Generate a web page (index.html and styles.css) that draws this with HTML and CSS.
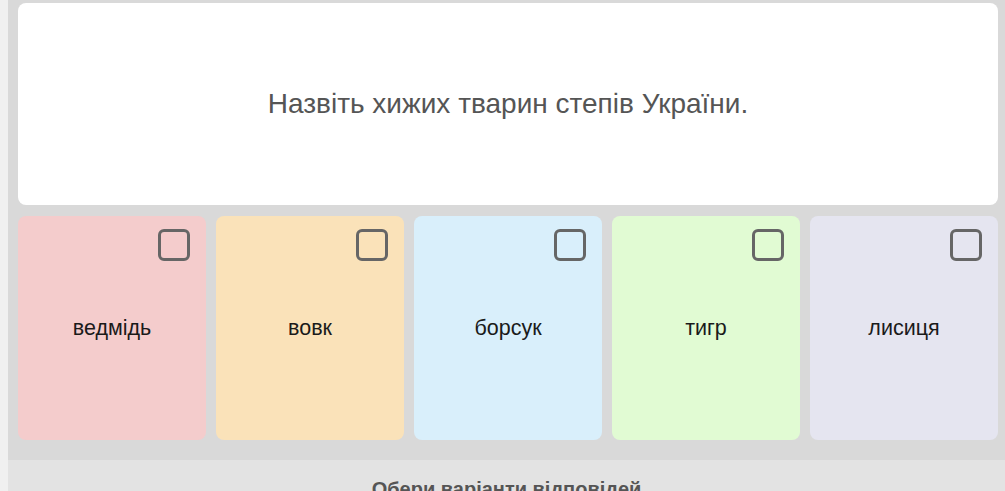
FILE: index.html
```html
<!DOCTYPE html>
<html>
<head>
  <meta charset="utf-8">
  <title>Вікторина</title>
  <link rel="stylesheet" href="styles.css">
</head>
<body>
  <div class="quiz">
    <div class="question">Назвіть хижих тварин степів України.</div>
    <div class="answers">
      <div class="answer pink"><span class="box"></span><span class="label">ведмідь</span></div>
      <div class="answer orange"><span class="box"></span><span class="label">вовк</span></div>
      <div class="answer blue"><span class="box"></span><span class="label">борсук</span></div>
      <div class="answer green"><span class="box"></span><span class="label">тигр</span></div>
      <div class="answer violet"><span class="box"></span><span class="label">лисиця</span></div>
    </div>
  </div>
  <div class="footer">Обери варіанти відповідей</div>
</body>
</html>
```
FILE: styles.css
```css
body {
  margin: 0;
  background: #f0f0f0;
  font-family: "Liberation Sans", Arial, sans-serif;
}

.quiz {
  margin-left: 8px;
  background: #d9d9d9;
  padding: 3px 7px 20px 10px;
}

.question {
  background: #fff;
  border-radius: 8px;
  height: 202px;
  display: flex;
  align-items: center;
  justify-content: center;
  font-size: 28px;
  color: #555;
}

.answers {
  display: grid;
  grid-template-columns: repeat(5, 1fr);
  gap: 10px;
  margin-top: 11px;
}

.answer {
  height: 224px;
  border-radius: 8px;
  display: flex;
  align-items: center;
  justify-content: center;
  position: relative;
}

.label {
  font-size: 21.5px;
  color: #1a1a1a;
}

.box {
  position: absolute;
  top: 13px;
  right: 16px;
  width: 26px;
  height: 26px;
  border: 3px solid #666;
  border-radius: 6px;
}

.pink { background: #f4cccc; }
.orange { background: #fae2b9; }
.blue { background: #d9effb; }
.green { background: #e1fbd3; }
.violet { background: #e5e5f0; }

.footer {
  margin-left: 8px;
  background: #e3e3e3;
  height: 60px;
  padding-top: 18px;
  text-align: center;
  font-size: 20px;
  font-weight: bold;
  color: #555;
  box-sizing: border-box;
}
```
